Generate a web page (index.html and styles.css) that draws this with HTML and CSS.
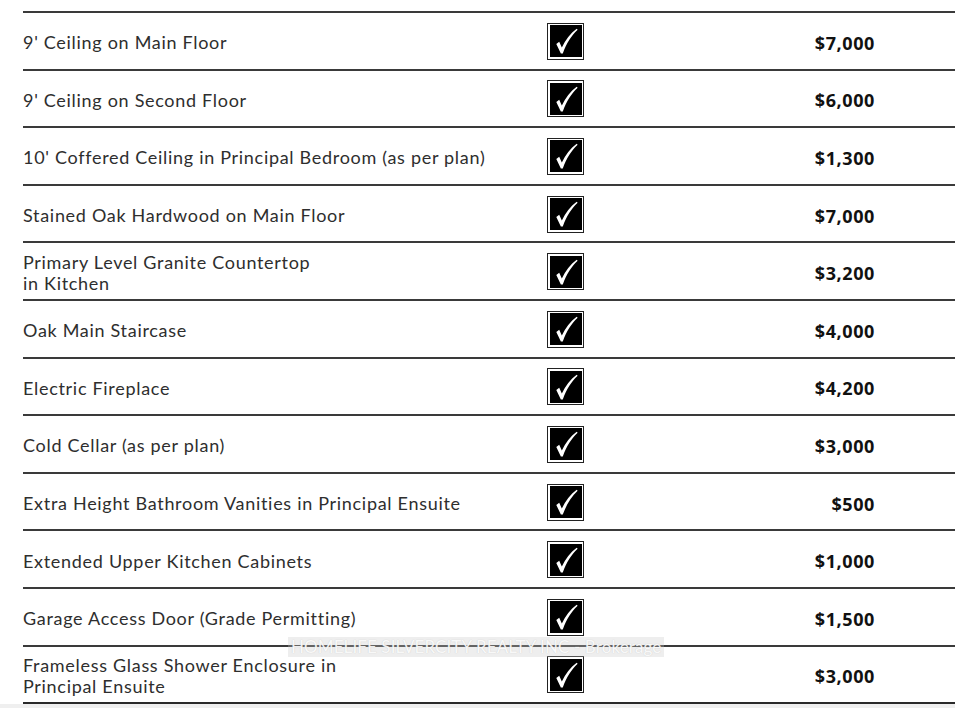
FILE: index.html
```html
<!DOCTYPE html>
<html>
<head>
<meta charset="utf-8">
<link rel="stylesheet" href="styles.css">
</head>
<body>
<div class="sheet">
  <div class="table">
    <div class="row"><div class="label">9' Ceiling on Main Floor</div><div class="check"><svg viewBox="0 0 33 33"><path d="M6.5 19.5 L9.5 17.2 L12.2 23.2 C16 15 21 8.5 27.5 3.8 L28.5 5 C22 11 17 19 13.2 29.5 L11.2 29.5 Z"/></svg></div><div class="price">$7,000</div></div>
    <div class="row"><div class="label">9' Ceiling on Second Floor</div><div class="check"><svg viewBox="0 0 33 33"><path d="M6.5 19.5 L9.5 17.2 L12.2 23.2 C16 15 21 8.5 27.5 3.8 L28.5 5 C22 11 17 19 13.2 29.5 L11.2 29.5 Z"/></svg></div><div class="price">$6,000</div></div>
    <div class="row"><div class="label">10' Coffered Ceiling in Principal Bedroom (as per plan)</div><div class="check"><svg viewBox="0 0 33 33"><path d="M6.5 19.5 L9.5 17.2 L12.2 23.2 C16 15 21 8.5 27.5 3.8 L28.5 5 C22 11 17 19 13.2 29.5 L11.2 29.5 Z"/></svg></div><div class="price">$1,300</div></div>
    <div class="row"><div class="label">Stained Oak Hardwood on Main Floor</div><div class="check"><svg viewBox="0 0 33 33"><path d="M6.5 19.5 L9.5 17.2 L12.2 23.2 C16 15 21 8.5 27.5 3.8 L28.5 5 C22 11 17 19 13.2 29.5 L11.2 29.5 Z"/></svg></div><div class="price">$7,000</div></div>
    <div class="row"><div class="label">Primary Level Granite Countertop<br>in Kitchen</div><div class="check"><svg viewBox="0 0 33 33"><path d="M6.5 19.5 L9.5 17.2 L12.2 23.2 C16 15 21 8.5 27.5 3.8 L28.5 5 C22 11 17 19 13.2 29.5 L11.2 29.5 Z"/></svg></div><div class="price">$3,200</div></div>
    <div class="row"><div class="label">Oak Main Staircase</div><div class="check"><svg viewBox="0 0 33 33"><path d="M6.5 19.5 L9.5 17.2 L12.2 23.2 C16 15 21 8.5 27.5 3.8 L28.5 5 C22 11 17 19 13.2 29.5 L11.2 29.5 Z"/></svg></div><div class="price">$4,000</div></div>
    <div class="row"><div class="label">Electric Fireplace</div><div class="check"><svg viewBox="0 0 33 33"><path d="M6.5 19.5 L9.5 17.2 L12.2 23.2 C16 15 21 8.5 27.5 3.8 L28.5 5 C22 11 17 19 13.2 29.5 L11.2 29.5 Z"/></svg></div><div class="price">$4,200</div></div>
    <div class="row"><div class="label">Cold Cellar (as per plan)</div><div class="check"><svg viewBox="0 0 33 33"><path d="M6.5 19.5 L9.5 17.2 L12.2 23.2 C16 15 21 8.5 27.5 3.8 L28.5 5 C22 11 17 19 13.2 29.5 L11.2 29.5 Z"/></svg></div><div class="price">$3,000</div></div>
    <div class="row"><div class="label">Extra Height Bathroom Vanities in Principal Ensuite</div><div class="check"><svg viewBox="0 0 33 33"><path d="M6.5 19.5 L9.5 17.2 L12.2 23.2 C16 15 21 8.5 27.5 3.8 L28.5 5 C22 11 17 19 13.2 29.5 L11.2 29.5 Z"/></svg></div><div class="price">$500</div></div>
    <div class="row"><div class="label">Extended Upper Kitchen Cabinets</div><div class="check"><svg viewBox="0 0 33 33"><path d="M6.5 19.5 L9.5 17.2 L12.2 23.2 C16 15 21 8.5 27.5 3.8 L28.5 5 C22 11 17 19 13.2 29.5 L11.2 29.5 Z"/></svg></div><div class="price">$1,000</div></div>
    <div class="row"><div class="label">Garage Access Door (Grade Permitting)</div><div class="check"><svg viewBox="0 0 33 33"><path d="M6.5 19.5 L9.5 17.2 L12.2 23.2 C16 15 21 8.5 27.5 3.8 L28.5 5 C22 11 17 19 13.2 29.5 L11.2 29.5 Z"/></svg></div><div class="price">$1,500</div></div>
    <div class="row last"><div class="label">Frameless Glass Shower Enclosure in<br>Principal Ensuite</div><div class="check"><svg viewBox="0 0 33 33"><path d="M6.5 19.5 L9.5 17.2 L12.2 23.2 C16 15 21 8.5 27.5 3.8 L28.5 5 C22 11 17 19 13.2 29.5 L11.2 29.5 Z"/></svg></div><div class="price">$3,000</div>
      <div class="watermark">HOMELIFE SILVERCITY REALTY INC - Brokerage</div>
    </div>
  </div>
  <div class="strip"></div>
</div>
</body>
</html>
```

FILE: styles.css
```css
html, body {
  margin: 0;
  padding: 0;
  background: #fff;
}

.sheet {
  width: 955px;
  height: 708px;
  overflow: hidden;
  display: flex;
  flex-direction: column;
}

.table {
  margin: 11px 0 0 23px;
  display: flex;
  flex-direction: column;
}

.row {
  position: relative;
  box-sizing: border-box;
  height: 57.6px;
  border-top: 2px solid #3a3a3a;
  display: flex;
  align-items: center;
}

.row.last {
  border-bottom: 2px solid #2a2a2a;
  height: 59.6px;
}

.label {
  width: 524px;
  font-family: Lato, "Open Sans", sans-serif;
  font-size: 18px;
  line-height: 21px;
  letter-spacing: 0.7px;
  color: #2e2e2e;
  padding-top: 4px;
}

.check {
  box-sizing: border-box;
  width: 37px;
  height: 37px;
  border: 1px solid #222;
  padding: 1.5px;
  background: #fff;
  margin-top: 1px;
}

.check svg {
  display: block;
  width: 32px;
  height: 32px;
  background: #000;
  fill: #fff;
}

.price {
  width: 291px;
  text-align: right;
  font-family: "Open Sans", Lato, sans-serif;
  font-weight: 700;
  font-size: 18px;
  letter-spacing: 0.6px;
  color: #111;
  padding-top: 4px;
}

.watermark {
  position: absolute;
  left: 265px;
  top: -10px;
  padding: 0 3px;
  height: 20px;
  line-height: 20px;
  background: rgba(200, 200, 200, 0.3);
  color: rgba(255, 255, 255, 0.9);
  font-family: Lato, sans-serif;
  font-size: 17px;
  letter-spacing: 0.1px;
  text-shadow: 0 0 1px rgba(150, 150, 150, 0.45);
  white-space: nowrap;
}

.strip {
  flex: 1;
  background: #efefef;
}
```
